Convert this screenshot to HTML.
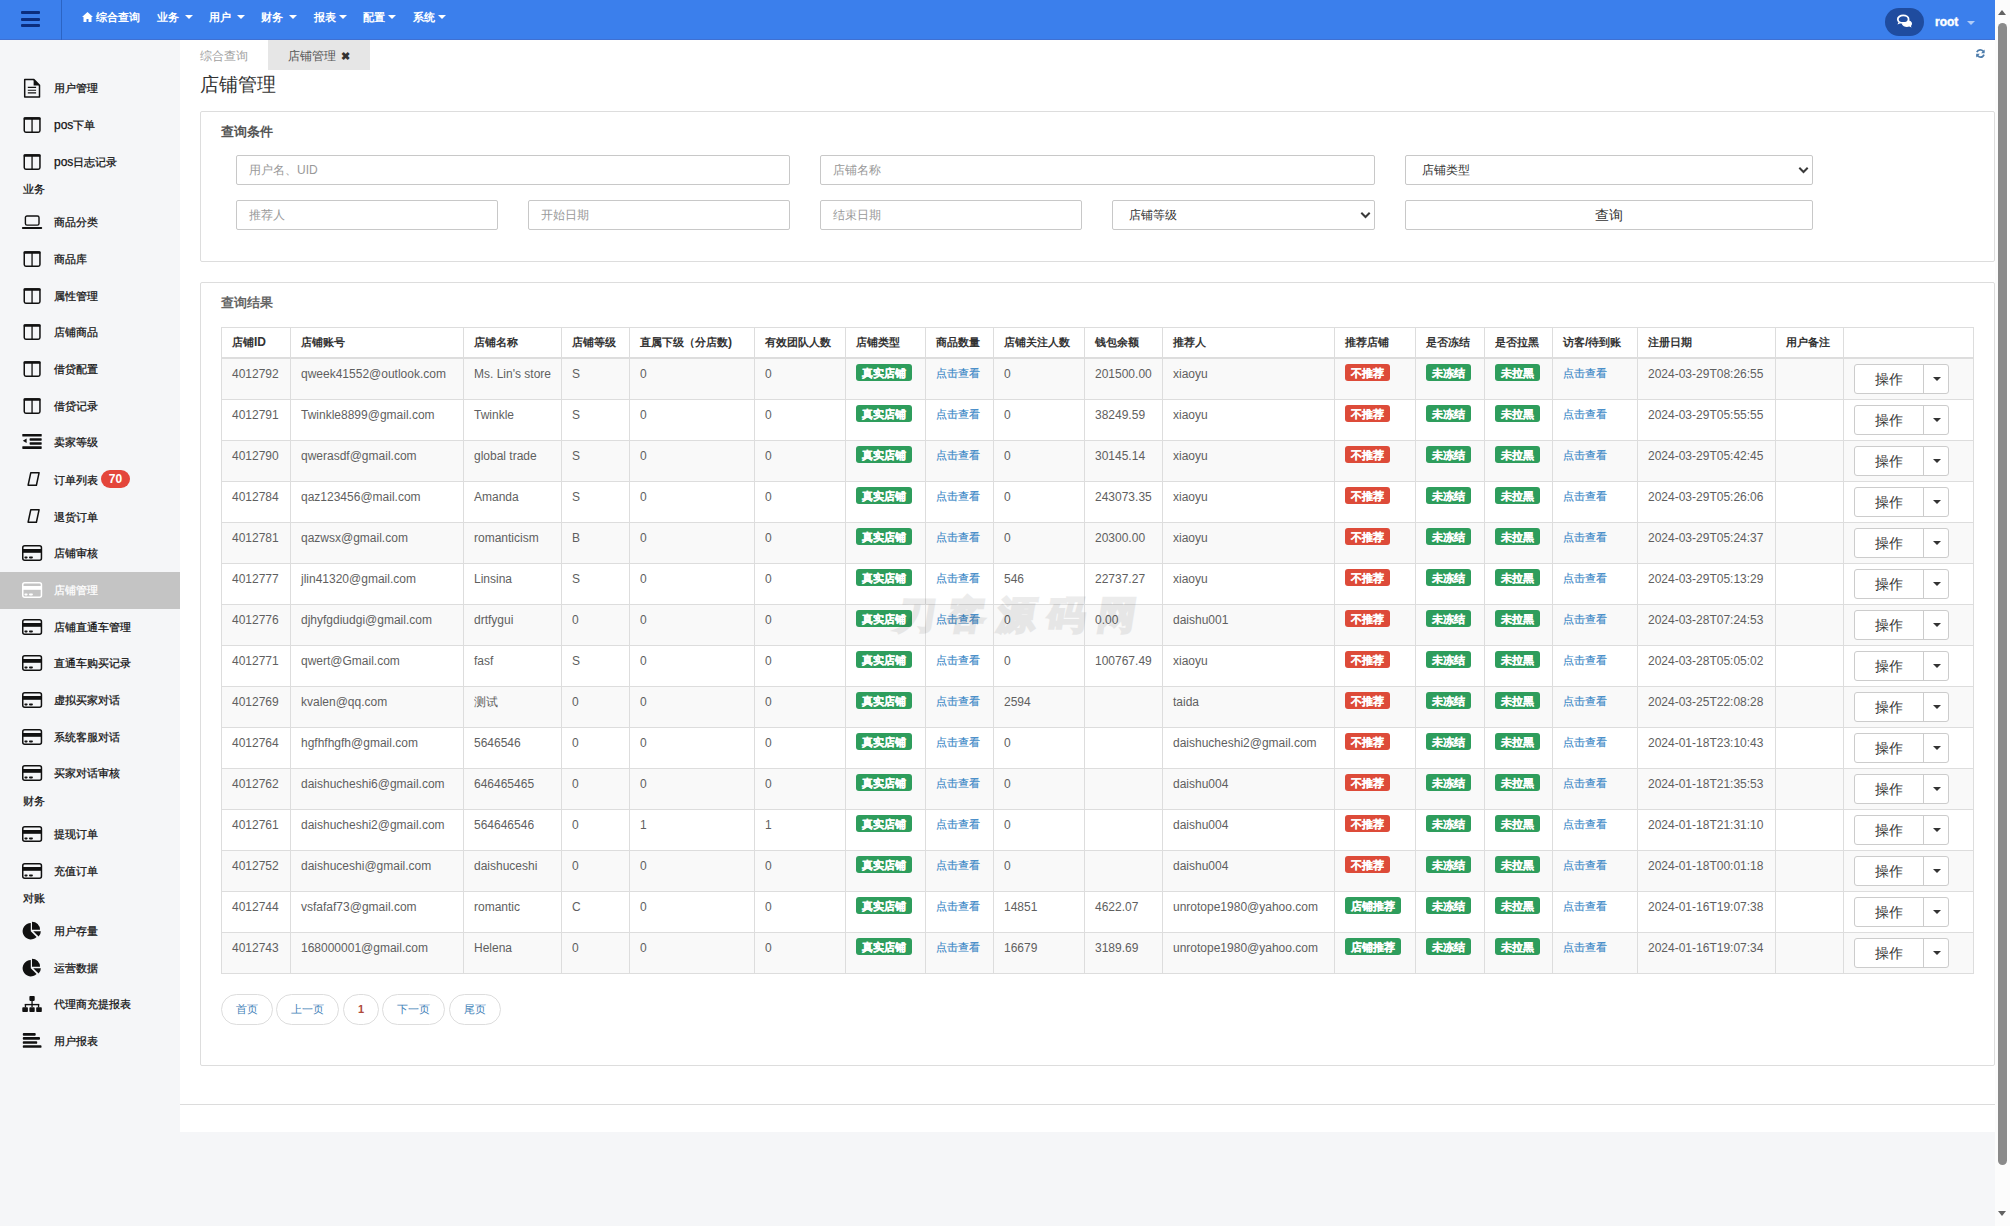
<!DOCTYPE html>
<html><head><meta charset="utf-8"><title>店铺管理</title><style>
*{box-sizing:border-box;margin:0;padding:0}
html,body{width:2010px;height:1226px;overflow:hidden;background:#fff;font-family:"Liberation Sans",sans-serif;font-size:12px;color:#333}
.top{position:absolute;left:0;top:0;width:1995px;height:40px;background:#3b7fec;box-shadow:inset 0 -1px 0 #3f70d2}
.burger{position:absolute;left:21px;top:11px;width:19px;height:16px}
.burger i{position:absolute;left:0;width:19px;height:3px;background:#0b2d7e;border-radius:1px}
.vdiv{position:absolute;left:61px;top:0;width:1px;height:40px;background:#2b64c4}
.nav{position:absolute;top:0;height:36px;line-height:35px;color:#fff;font-weight:bold;font-size:11px;white-space:nowrap}
.ncaret{display:inline-block;width:0;height:0;border-left:4px solid transparent;border-right:4px solid transparent;border-top:4px solid #fff;vertical-align:middle;margin-left:6px;margin-top:-2px}
.pill{position:absolute;left:1885px;top:8px;width:39px;height:28px;border-radius:14px;background:#1f4c9f}
.root{position:absolute;left:1935px;top:14px;color:#fff;font-weight:bold;font-size:12px;line-height:16px;-webkit-text-stroke:.4px #fff}
.rcaret{position:absolute;left:1967px;top:21px;width:0;height:0;border-left:4px solid transparent;border-right:4px solid transparent;border-top:4px solid rgba(255,255,255,.6)}
.side{position:absolute;left:0;top:40px;width:180px;height:1186px;background:#f5f6f8}
.sitem{position:absolute;left:0;width:180px;height:37px}
.sitem.active{background:#c4c4c4}
.ic{position:absolute;display:block}
.stext{position:absolute;left:54px;top:0;line-height:37px;font-size:11px;color:#111;white-space:nowrap;-webkit-text-stroke:.25px #111}
.active .stext{color:#fff;-webkit-text-stroke:.25px #fff}
.slabel{position:absolute;left:23px;font-size:11px;line-height:18px;color:#111;white-space:nowrap;-webkit-text-stroke:.25px #111}
.badge{position:absolute;left:101px;top:8px;width:29px;height:18px;line-height:18px;text-align:center;border-radius:9px;background:#e4463b;color:#fff;font-weight:bold;font-size:12px}
.main{position:absolute;left:180px;top:40px;width:1815px;height:1090px;background:#fff}
.foot{position:absolute;left:180px;top:1104px;width:1815px;height:1px;background:#dcdcdc}
.below{position:absolute;left:180px;top:1132px;width:1815px;height:94px;background:#f5f6f8}
.tab1{position:absolute;left:200px;top:48px;line-height:17px;color:#a0a0a0;font-size:12px}
.tab2{position:absolute;left:268px;top:40px;width:102px;height:30px;background:#e6e6e6;color:#555;font-size:12px;line-height:32px;padding-left:20px}
.tab2 b{font-size:11px;color:#333;margin-left:5px}
.refresh{position:absolute;left:1975px;top:48px}
h1{position:absolute;left:200px;top:72px;font-size:19px;font-weight:normal;color:#333;line-height:26px}
.panel{position:absolute;left:200px;width:1795px;border:1px solid #ddd;border-radius:2px;background:#fff}
.ptitle{position:absolute;left:20px;font-size:13px;font-weight:bold;color:#555}
.inp{position:absolute;height:30px;border:1px solid #c8c8c8;border-radius:2px;background:#fff;color:#999;font-size:12px;line-height:28px;padding-left:12px}
.sel{color:#333;padding-left:16px}
.sel svg{position:absolute;right:3px;top:10px}
.btnq{position:absolute;height:30px;border:1px solid #c8c8c8;border-radius:2px;background:#fff;color:#333;font-size:14px;line-height:28px;text-align:center}
.tbl{position:absolute;left:20px;top:44px;border-collapse:collapse;table-layout:fixed;width:1752px}
.tbl th,.tbl td{border:1px solid #ddd;text-align:left;vertical-align:top;white-space:nowrap;overflow:hidden}
.tbl th{height:30px;padding:0 10px;line-height:29px;font-weight:bold;color:#333;font-size:11px;border-bottom:2px solid #ddd}
.tbl td{height:41px;padding:7px 10px 0;line-height:17px;color:#5f5f5f;font-size:12px}
.tbl tr.odd td{background:#f9f9f9}
.lab{display:inline-block;position:relative;top:-2px;height:17px;line-height:18px;padding:0 6px;border-radius:3px;color:#fff;font-weight:bold;font-size:11px;-webkit-text-stroke:.2px #fff;overflow:hidden}
.green{background:#2e9d5c}
.red{background:#dd4b39}
.lnk{color:#3a87c6;font-size:11px;position:relative;top:-1px;-webkit-text-stroke:.15px #3a87c6}
.opbtn{position:relative;width:95px;height:30px;border:1px solid #ccc;border-radius:3px;background:#fff;margin-top:-2px}
.op1{position:absolute;left:0;top:0;width:69px;height:28px;line-height:28px;text-align:center;font-size:14px;color:#333;border-right:1px solid #ccc}
.op2{position:absolute;left:69px;top:0;width:25px;height:28px}
.caret{position:absolute;left:9px;top:12px;width:0;height:0;border-left:4px solid transparent;border-right:4px solid transparent;border-top:4px solid #333}
.pager{position:absolute;left:20px;top:711px;height:31px}
.pg{position:absolute;top:0;height:31px;border:1px solid #ddd;border-radius:16px;color:#3f82b8;font-size:11px;line-height:29px;text-align:center;background:#fff}
.wm{position:absolute;left:894px;top:590px;font-size:38px;font-weight:bold;color:#000;-webkit-text-stroke:2.5px #000;opacity:.07;letter-spacing:12px;white-space:nowrap;transform:skewX(-9deg);transform-origin:0 100%}
.sb{position:absolute;left:1995px;top:0;width:15px;height:1226px;background:#fcfcfc}
.sbthumb{position:absolute;left:3px;top:23px;width:9px;height:1142px;border-radius:5px;background:#8a8a8a}
.sbup{position:absolute;left:3px;top:10px;width:0;height:0;border-left:4.5px solid transparent;border-right:4.5px solid transparent;border-bottom:5px solid #626262}
.sbdn{position:absolute;left:3px;top:1211px;width:0;height:0;border-left:4.5px solid transparent;border-right:4.5px solid transparent;border-top:5px solid #626262}
</style></head><body>
<div class="top">
  <div class="burger"><i style="top:0"></i><i style="top:7px"></i><i style="top:13px"></i></div>
  <div class="vdiv"></div>
  <div class="nav" style="left:82px"><svg width="11" height="10" viewBox="0 0 11 10" style="vertical-align:-1px;margin-right:3px"><path d="M5.5 0L0 5h1.5v5h3V7h2v3h3V5H11z" fill="#fff"/></svg>综合查询</div>
  <div class="nav" style="left:157px">业务<i class="ncaret"></i></div>
  <div class="nav" style="left:209px">用户<i class="ncaret"></i></div>
  <div class="nav" style="left:261px">财务<i class="ncaret"></i></div>
  <div class="nav" style="left:314px">报表<i class="ncaret" style="margin-left:3px"></i></div>
  <div class="nav" style="left:363px">配置<i class="ncaret" style="margin-left:3px"></i></div>
  <div class="nav" style="left:413px">系统<i class="ncaret" style="margin-left:3px"></i></div>
  <div class="pill"><svg width="20" height="16" viewBox="0 0 20 16" style="position:absolute;left:11px;top:6px"><path d="M9.5 5.5c3 0 6.5 1.8 6.5 4.2 0 0.9-0.4 1.7-1.1 2.3l0.7 1.5-2.4-0.9c-0.7 0.2-1.5 0.3-2.3 0.3-2.3 0-4.3-1-5-2.6z" fill="#fff"/><ellipse cx="7.2" cy="5.2" rx="5.4" ry="3.8" fill="#1f4c9f" stroke="#fff" stroke-width="1.8"/><path d="M2.6 8l-1.1 2.6 3.6-1.5z" fill="#fff"/></svg></div>
  <div class="root">root</div>
  <div class="rcaret"></div>
</div>
<div class="side">
<div style="position:absolute;left:0;top:-40px">
<div class="sitem" style="top:70px"><svg class="ic" style="left:23px;top:8px" width="19" height="21" viewBox="0 0 19 21"><path d="M1.7 1.6H10.9L16.5 7.2V19H1.7Z" fill="none" stroke="#111" stroke-width="1.5" stroke-linejoin="round"/><path d="M10.6 1.6V7.5H16.5Z" fill="#111"/><path d="M4.8 9.4H13.1M4.8 12.2H13.1M4.8 14.9H13.1" stroke="#111" stroke-width="1.1"/></svg><span class="stext">用户管理</span></div>
<div class="sitem" style="top:107px"><svg class="ic" style="left:23px;top:10px" width="19" height="17" viewBox="0 0 19 17"><rect x="1.25" y="0.95" width="15.7" height="14.2" rx="1.6" fill="none" stroke="#111" stroke-width="1.5"/><rect x="0.5" y="0.2" width="17.2" height="2.6" rx="1" fill="#111"/><rect x="8.4" y="1" width="1.3" height="14" fill="#111"/></svg><span class="stext"><span style="font-size:12px">pos</span>下单</span></div>
<div class="sitem" style="top:144px"><svg class="ic" style="left:23px;top:10px" width="19" height="17" viewBox="0 0 19 17"><rect x="1.25" y="0.95" width="15.7" height="14.2" rx="1.6" fill="none" stroke="#111" stroke-width="1.5"/><rect x="0.5" y="0.2" width="17.2" height="2.6" rx="1" fill="#111"/><rect x="8.4" y="1" width="1.3" height="14" fill="#111"/></svg><span class="stext"><span style="font-size:12px">pos</span>日志记录</span></div>
<div class="slabel" style="top:180px">业务</div>
<div class="sitem" style="top:204px"><svg class="ic" style="left:21px;top:11px" width="23" height="15" viewBox="0 0 23 15"><rect x="4.4" y="1" width="13.6" height="9.1" rx="1.6" fill="none" stroke="#111" stroke-width="1.4"/><rect x="0.9" y="12" width="20.3" height="1.9" rx="0.9" fill="#111"/></svg><span class="stext">商品分类</span></div>
<div class="sitem" style="top:241px"><svg class="ic" style="left:23px;top:10px" width="19" height="17" viewBox="0 0 19 17"><rect x="1.25" y="0.95" width="15.7" height="14.2" rx="1.6" fill="none" stroke="#111" stroke-width="1.5"/><rect x="0.5" y="0.2" width="17.2" height="2.6" rx="1" fill="#111"/><rect x="8.4" y="1" width="1.3" height="14" fill="#111"/></svg><span class="stext">商品库</span></div>
<div class="sitem" style="top:278px"><svg class="ic" style="left:23px;top:10px" width="19" height="17" viewBox="0 0 19 17"><rect x="1.25" y="0.95" width="15.7" height="14.2" rx="1.6" fill="none" stroke="#111" stroke-width="1.5"/><rect x="0.5" y="0.2" width="17.2" height="2.6" rx="1" fill="#111"/><rect x="8.4" y="1" width="1.3" height="14" fill="#111"/></svg><span class="stext">属性管理</span></div>
<div class="sitem" style="top:314px"><svg class="ic" style="left:23px;top:10px" width="19" height="17" viewBox="0 0 19 17"><rect x="1.25" y="0.95" width="15.7" height="14.2" rx="1.6" fill="none" stroke="#111" stroke-width="1.5"/><rect x="0.5" y="0.2" width="17.2" height="2.6" rx="1" fill="#111"/><rect x="8.4" y="1" width="1.3" height="14" fill="#111"/></svg><span class="stext">店铺商品</span></div>
<div class="sitem" style="top:351px"><svg class="ic" style="left:23px;top:10px" width="19" height="17" viewBox="0 0 19 17"><rect x="1.25" y="0.95" width="15.7" height="14.2" rx="1.6" fill="none" stroke="#111" stroke-width="1.5"/><rect x="0.5" y="0.2" width="17.2" height="2.6" rx="1" fill="#111"/><rect x="8.4" y="1" width="1.3" height="14" fill="#111"/></svg><span class="stext">借贷配置</span></div>
<div class="sitem" style="top:388px"><svg class="ic" style="left:23px;top:10px" width="19" height="17" viewBox="0 0 19 17"><rect x="1.25" y="0.95" width="15.7" height="14.2" rx="1.6" fill="none" stroke="#111" stroke-width="1.5"/><rect x="0.5" y="0.2" width="17.2" height="2.6" rx="1" fill="#111"/><rect x="8.4" y="1" width="1.3" height="14" fill="#111"/></svg><span class="stext">借贷记录</span></div>
<div class="sitem" style="top:424px"><svg class="ic" style="left:22px;top:9px" width="21" height="17" viewBox="0 0 21 17"><rect x="0.3" y="0.9" width="19.4" height="2.7" rx="0.6" fill="#111"/><rect x="7.6" y="5.3" width="12.1" height="2.4" rx="0.6" fill="#111"/><rect x="7.6" y="9.2" width="12.1" height="2.5" rx="0.6" fill="#111"/><rect x="0.3" y="13.2" width="19.4" height="2.7" rx="0.6" fill="#111"/><path d="M4.6 5.5L0.8 7.75L4.6 10Z" fill="#111"/></svg><span class="stext">卖家等级</span></div>
<div class="sitem" style="top:462px"><svg class="ic" style="left:27px;top:9px" width="15" height="17" viewBox="0 0 15 17"><path d="M3.8 1.65H12.1L9.4 14.25H1.1Z" fill="none" stroke="#111" stroke-width="1.5" stroke-linejoin="round"/></svg><span class="stext">订单列表</span><span class="badge">70</span></div>
<div class="sitem" style="top:499px"><svg class="ic" style="left:27px;top:9px" width="15" height="17" viewBox="0 0 15 17"><path d="M3.8 1.65H12.1L9.4 14.25H1.1Z" fill="none" stroke="#111" stroke-width="1.5" stroke-linejoin="round"/></svg><span class="stext">退货订单</span></div>
<div class="sitem" style="top:535px"><svg class="ic" style="left:22px;top:9px" width="21" height="18" viewBox="0 0 21 18"><rect x="0.75" y="1.65" width="18.7" height="14.6" rx="2" fill="none" stroke="#111" stroke-width="1.5"/><rect x="0.5" y="5" width="19.2" height="3.8" fill="#111"/><rect x="2.4" y="12.5" width="3.2" height="1.9" rx="0.8" fill="#111"/><rect x="7" y="12.5" width="3.9" height="1.9" rx="0.8" fill="#111"/></svg><span class="stext">店铺审核</span></div>
<div class="sitem active" style="top:572px"><svg class="ic" style="left:22px;top:9px" width="21" height="18" viewBox="0 0 21 18"><rect x="0.75" y="1.65" width="18.7" height="14.6" rx="2" fill="none" stroke="#fff" stroke-width="1.5"/><rect x="0.5" y="5" width="19.2" height="3.8" fill="#fff"/><rect x="2.4" y="12.5" width="3.2" height="1.9" rx="0.8" fill="#fff"/><rect x="7" y="12.5" width="3.9" height="1.9" rx="0.8" fill="#fff"/></svg><span class="stext">店铺管理</span></div>
<div class="sitem" style="top:609px"><svg class="ic" style="left:22px;top:9px" width="21" height="18" viewBox="0 0 21 18"><rect x="0.75" y="1.65" width="18.7" height="14.6" rx="2" fill="none" stroke="#111" stroke-width="1.5"/><rect x="0.5" y="5" width="19.2" height="3.8" fill="#111"/><rect x="2.4" y="12.5" width="3.2" height="1.9" rx="0.8" fill="#111"/><rect x="7" y="12.5" width="3.9" height="1.9" rx="0.8" fill="#111"/></svg><span class="stext">店铺直通车管理</span></div>
<div class="sitem" style="top:645px"><svg class="ic" style="left:22px;top:9px" width="21" height="18" viewBox="0 0 21 18"><rect x="0.75" y="1.65" width="18.7" height="14.6" rx="2" fill="none" stroke="#111" stroke-width="1.5"/><rect x="0.5" y="5" width="19.2" height="3.8" fill="#111"/><rect x="2.4" y="12.5" width="3.2" height="1.9" rx="0.8" fill="#111"/><rect x="7" y="12.5" width="3.9" height="1.9" rx="0.8" fill="#111"/></svg><span class="stext">直通车购买记录</span></div>
<div class="sitem" style="top:682px"><svg class="ic" style="left:22px;top:9px" width="21" height="18" viewBox="0 0 21 18"><rect x="0.75" y="1.65" width="18.7" height="14.6" rx="2" fill="none" stroke="#111" stroke-width="1.5"/><rect x="0.5" y="5" width="19.2" height="3.8" fill="#111"/><rect x="2.4" y="12.5" width="3.2" height="1.9" rx="0.8" fill="#111"/><rect x="7" y="12.5" width="3.9" height="1.9" rx="0.8" fill="#111"/></svg><span class="stext">虚拟买家对话</span></div>
<div class="sitem" style="top:719px"><svg class="ic" style="left:22px;top:9px" width="21" height="18" viewBox="0 0 21 18"><rect x="0.75" y="1.65" width="18.7" height="14.6" rx="2" fill="none" stroke="#111" stroke-width="1.5"/><rect x="0.5" y="5" width="19.2" height="3.8" fill="#111"/><rect x="2.4" y="12.5" width="3.2" height="1.9" rx="0.8" fill="#111"/><rect x="7" y="12.5" width="3.9" height="1.9" rx="0.8" fill="#111"/></svg><span class="stext">系统客服对话</span></div>
<div class="sitem" style="top:755px"><svg class="ic" style="left:22px;top:9px" width="21" height="18" viewBox="0 0 21 18"><rect x="0.75" y="1.65" width="18.7" height="14.6" rx="2" fill="none" stroke="#111" stroke-width="1.5"/><rect x="0.5" y="5" width="19.2" height="3.8" fill="#111"/><rect x="2.4" y="12.5" width="3.2" height="1.9" rx="0.8" fill="#111"/><rect x="7" y="12.5" width="3.9" height="1.9" rx="0.8" fill="#111"/></svg><span class="stext">买家对话审核</span></div>
<div class="slabel" style="top:792px">财务</div>
<div class="sitem" style="top:816px"><svg class="ic" style="left:22px;top:9px" width="21" height="18" viewBox="0 0 21 18"><rect x="0.75" y="1.65" width="18.7" height="14.6" rx="2" fill="none" stroke="#111" stroke-width="1.5"/><rect x="0.5" y="5" width="19.2" height="3.8" fill="#111"/><rect x="2.4" y="12.5" width="3.2" height="1.9" rx="0.8" fill="#111"/><rect x="7" y="12.5" width="3.9" height="1.9" rx="0.8" fill="#111"/></svg><span class="stext">提现订单</span></div>
<div class="sitem" style="top:853px"><svg class="ic" style="left:22px;top:9px" width="21" height="18" viewBox="0 0 21 18"><rect x="0.75" y="1.65" width="18.7" height="14.6" rx="2" fill="none" stroke="#111" stroke-width="1.5"/><rect x="0.5" y="5" width="19.2" height="3.8" fill="#111"/><rect x="2.4" y="12.5" width="3.2" height="1.9" rx="0.8" fill="#111"/><rect x="7" y="12.5" width="3.9" height="1.9" rx="0.8" fill="#111"/></svg><span class="stext">充值订单</span></div>
<div class="slabel" style="top:889px">对账</div>
<div class="sitem" style="top:913px"><svg class="ic" style="left:22px;top:8px" width="21" height="20" viewBox="0 0 21 20"><path d="M8.8 10.2V2A8.2 8.2 0 1 0 14.6 16Z" fill="#111"/><path d="M10 8.7V0.7A8 8 0 0 1 18 8.7Z" fill="#111"/><path d="M11.2 10.2H18.8A7.6 7.6 0 0 1 16.6 15.6Z" fill="#111"/></svg><span class="stext">用户存量</span></div>
<div class="sitem" style="top:950px"><svg class="ic" style="left:22px;top:8px" width="21" height="20" viewBox="0 0 21 20"><path d="M8.8 10.2V2A8.2 8.2 0 1 0 14.6 16Z" fill="#111"/><path d="M10 8.7V0.7A8 8 0 0 1 18 8.7Z" fill="#111"/><path d="M11.2 10.2H18.8A7.6 7.6 0 0 1 16.6 15.6Z" fill="#111"/></svg><span class="stext">运营数据</span></div>
<div class="sitem" style="top:986px"><svg class="ic" style="left:22px;top:9px" width="21" height="19" viewBox="0 0 21 19"><rect x="7.4" y="1" width="5.3" height="4.9" rx="0.8" fill="#111"/><rect x="9.4" y="5" width="1.3" height="7" fill="#111"/><rect x="2.8" y="8.9" width="14.4" height="1.4" fill="#111"/><rect x="2.8" y="9" width="1.3" height="3.5" fill="#111"/><rect x="15.9" y="9" width="1.3" height="3.5" fill="#111"/><rect x="0.3" y="12.2" width="5.6" height="4.8" rx="0.8" fill="#111"/><rect x="7.4" y="12.2" width="5.3" height="4.8" rx="0.8" fill="#111"/><rect x="14.2" y="12.2" width="5.6" height="4.8" rx="0.8" fill="#111"/></svg><span class="stext">代理商充提报表</span></div>
<div class="sitem" style="top:1023px"><svg class="ic" style="left:22px;top:9px" width="21" height="17" viewBox="0 0 21 17"><rect x="0.8" y="1" width="12.9" height="2.7" rx="0.9" fill="#111"/><rect x="0.8" y="5" width="17.2" height="2.7" rx="0.9" fill="#111"/><rect x="0.8" y="9.2" width="14.4" height="2.6" rx="0.9" fill="#111"/><rect x="0.8" y="13.2" width="18.7" height="2.6" rx="0.9" fill="#111"/></svg><span class="stext">用户报表</span></div>
</div>
</div>
<div class="main"></div>
<div class="foot"></div>
<div class="below"></div>
<div class="tab1">综合查询</div>
<div class="tab2">店铺管理<b>✖</b></div>
<div class="refresh"><svg width="11" height="11" viewBox="0 0 11 11"><path d="M1.8 4.2C2.6 2.4 4.4 1.6 6.2 2c1.2 0.3 2 1 2.6 2" fill="none" stroke="#4d7cab" stroke-width="1.7"/><path d="M9.6 1.5v3.8H6z" fill="#4d7cab"/><path d="M9 6.6C8.2 8.6 6.4 9.4 4.6 9c-1.2-0.3-2-1-2.6-2" fill="none" stroke="#4d7cab" stroke-width="1.7"/><path d="M1.2 9.6V5.8h3.6z" fill="#4d7cab"/></svg></div>
<h1>店铺管理</h1>
<div class="panel" style="top:111px;height:151px">
  <div class="ptitle" style="top:11px">查询条件</div>
  <div class="inp" style="left:35px;top:43px;width:554px">用户名、UID</div>
  <div class="inp" style="left:619px;top:43px;width:555px">店铺名称</div>
  <div class="inp sel" style="left:1204px;top:43px;width:408px">店铺类型<svg width="11" height="8" viewBox="0 0 11 8"><path d="M1.3 1.8l4.2 4.2 4.2-4.2" fill="none" stroke="#3a3a3a" stroke-width="2"/></svg></div>
  <div class="inp" style="left:35px;top:88px;width:262px">推荐人</div>
  <div class="inp" style="left:327px;top:88px;width:262px">开始日期</div>
  <div class="inp" style="left:619px;top:88px;width:262px">结束日期</div>
  <div class="inp sel" style="left:911px;top:88px;width:263px">店铺等级<svg width="11" height="8" viewBox="0 0 11 8"><path d="M1.3 1.8l4.2 4.2 4.2-4.2" fill="none" stroke="#3a3a3a" stroke-width="2"/></svg></div>
  <div class="btnq" style="left:1204px;top:88px;width:408px">查询</div>
</div>
<div class="panel" style="top:282px;height:784px">
  <div class="ptitle" style="top:11px;color:#666">查询结果</div>
  <table class="tbl"><colgroup><col style="width:69px"><col style="width:173px"><col style="width:98px"><col style="width:68px"><col style="width:125px"><col style="width:91px"><col style="width:80px"><col style="width:68px"><col style="width:91px"><col style="width:78px"><col style="width:172px"><col style="width:81px"><col style="width:69px"><col style="width:68px"><col style="width:85px"><col style="width:138px"><col style="width:68px"><col style="width:130px"></colgroup><thead><tr><th>店铺<span style="font-size:12px">ID</span></th><th>店铺账号</th><th>店铺名称</th><th>店铺等级</th><th>直属下级（分店数<span style="font-size:12px">)</span></th><th>有效团队人数</th><th>店铺类型</th><th>商品数量</th><th>店铺关注人数</th><th>钱包余额</th><th>推荐人</th><th>推荐店铺</th><th>是否冻结</th><th>是否拉黑</th><th>访客<span style="font-size:12px">/</span>待到账</th><th>注册日期</th><th>用户备注</th><th></th></tr></thead><tbody><tr class="odd"><td>4012792</td><td>qweek41552@outlook.com</td><td>Ms. Lin's store</td><td>S</td><td>0</td><td>0</td><td><span class="lab green">真实店铺</span></td><td><span class="lnk">点击查看</span></td><td>0</td><td>201500.00</td><td>xiaoyu</td><td><span class="lab red">不推荐</span></td><td><span class="lab green">未冻结</span></td><td><span class="lab green">未拉黑</span></td><td><span class="lnk">点击查看</span></td><td>2024-03-29T08:26:55</td><td></td><td><div class="opbtn"><span class="op1">操作</span><span class="op2"><i class="caret"></i></span></div></td></tr><tr class="even"><td>4012791</td><td>Twinkle8899@gmail.com</td><td>Twinkle</td><td>S</td><td>0</td><td>0</td><td><span class="lab green">真实店铺</span></td><td><span class="lnk">点击查看</span></td><td>0</td><td>38249.59</td><td>xiaoyu</td><td><span class="lab red">不推荐</span></td><td><span class="lab green">未冻结</span></td><td><span class="lab green">未拉黑</span></td><td><span class="lnk">点击查看</span></td><td>2024-03-29T05:55:55</td><td></td><td><div class="opbtn"><span class="op1">操作</span><span class="op2"><i class="caret"></i></span></div></td></tr><tr class="odd"><td>4012790</td><td>qwerasdf@gmail.com</td><td>global trade</td><td>S</td><td>0</td><td>0</td><td><span class="lab green">真实店铺</span></td><td><span class="lnk">点击查看</span></td><td>0</td><td>30145.14</td><td>xiaoyu</td><td><span class="lab red">不推荐</span></td><td><span class="lab green">未冻结</span></td><td><span class="lab green">未拉黑</span></td><td><span class="lnk">点击查看</span></td><td>2024-03-29T05:42:45</td><td></td><td><div class="opbtn"><span class="op1">操作</span><span class="op2"><i class="caret"></i></span></div></td></tr><tr class="even"><td>4012784</td><td>qaz123456@mail.com</td><td>Amanda</td><td>S</td><td>0</td><td>0</td><td><span class="lab green">真实店铺</span></td><td><span class="lnk">点击查看</span></td><td>0</td><td>243073.35</td><td>xiaoyu</td><td><span class="lab red">不推荐</span></td><td><span class="lab green">未冻结</span></td><td><span class="lab green">未拉黑</span></td><td><span class="lnk">点击查看</span></td><td>2024-03-29T05:26:06</td><td></td><td><div class="opbtn"><span class="op1">操作</span><span class="op2"><i class="caret"></i></span></div></td></tr><tr class="odd"><td>4012781</td><td>qazwsx@gmail.com</td><td>romanticism</td><td>B</td><td>0</td><td>0</td><td><span class="lab green">真实店铺</span></td><td><span class="lnk">点击查看</span></td><td>0</td><td>20300.00</td><td>xiaoyu</td><td><span class="lab red">不推荐</span></td><td><span class="lab green">未冻结</span></td><td><span class="lab green">未拉黑</span></td><td><span class="lnk">点击查看</span></td><td>2024-03-29T05:24:37</td><td></td><td><div class="opbtn"><span class="op1">操作</span><span class="op2"><i class="caret"></i></span></div></td></tr><tr class="even"><td>4012777</td><td>jlin41320@gmail.com</td><td>Linsina</td><td>S</td><td>0</td><td>0</td><td><span class="lab green">真实店铺</span></td><td><span class="lnk">点击查看</span></td><td>546</td><td>22737.27</td><td>xiaoyu</td><td><span class="lab red">不推荐</span></td><td><span class="lab green">未冻结</span></td><td><span class="lab green">未拉黑</span></td><td><span class="lnk">点击查看</span></td><td>2024-03-29T05:13:29</td><td></td><td><div class="opbtn"><span class="op1">操作</span><span class="op2"><i class="caret"></i></span></div></td></tr><tr class="odd"><td>4012776</td><td>djhyfgdiudgi@gmail.com</td><td>drtfygui</td><td>0</td><td>0</td><td>0</td><td><span class="lab green">真实店铺</span></td><td><span class="lnk">点击查看</span></td><td>0</td><td>0.00</td><td>daishu001</td><td><span class="lab red">不推荐</span></td><td><span class="lab green">未冻结</span></td><td><span class="lab green">未拉黑</span></td><td><span class="lnk">点击查看</span></td><td>2024-03-28T07:24:53</td><td></td><td><div class="opbtn"><span class="op1">操作</span><span class="op2"><i class="caret"></i></span></div></td></tr><tr class="even"><td>4012771</td><td>qwert@Gmail.com</td><td>fasf</td><td>S</td><td>0</td><td>0</td><td><span class="lab green">真实店铺</span></td><td><span class="lnk">点击查看</span></td><td>0</td><td>100767.49</td><td>xiaoyu</td><td><span class="lab red">不推荐</span></td><td><span class="lab green">未冻结</span></td><td><span class="lab green">未拉黑</span></td><td><span class="lnk">点击查看</span></td><td>2024-03-28T05:05:02</td><td></td><td><div class="opbtn"><span class="op1">操作</span><span class="op2"><i class="caret"></i></span></div></td></tr><tr class="odd"><td>4012769</td><td>kvalen@qq.com</td><td>测试</td><td>0</td><td>0</td><td>0</td><td><span class="lab green">真实店铺</span></td><td><span class="lnk">点击查看</span></td><td>2594</td><td></td><td>taida</td><td><span class="lab red">不推荐</span></td><td><span class="lab green">未冻结</span></td><td><span class="lab green">未拉黑</span></td><td><span class="lnk">点击查看</span></td><td>2024-03-25T22:08:28</td><td></td><td><div class="opbtn"><span class="op1">操作</span><span class="op2"><i class="caret"></i></span></div></td></tr><tr class="even"><td>4012764</td><td>hgfhfhgfh@gmail.com</td><td>5646546</td><td>0</td><td>0</td><td>0</td><td><span class="lab green">真实店铺</span></td><td><span class="lnk">点击查看</span></td><td>0</td><td></td><td>daishucheshi2@gmail.com</td><td><span class="lab red">不推荐</span></td><td><span class="lab green">未冻结</span></td><td><span class="lab green">未拉黑</span></td><td><span class="lnk">点击查看</span></td><td>2024-01-18T23:10:43</td><td></td><td><div class="opbtn"><span class="op1">操作</span><span class="op2"><i class="caret"></i></span></div></td></tr><tr class="odd"><td>4012762</td><td>daishucheshi6@gmail.com</td><td>646465465</td><td>0</td><td>0</td><td>0</td><td><span class="lab green">真实店铺</span></td><td><span class="lnk">点击查看</span></td><td>0</td><td></td><td>daishu004</td><td><span class="lab red">不推荐</span></td><td><span class="lab green">未冻结</span></td><td><span class="lab green">未拉黑</span></td><td><span class="lnk">点击查看</span></td><td>2024-01-18T21:35:53</td><td></td><td><div class="opbtn"><span class="op1">操作</span><span class="op2"><i class="caret"></i></span></div></td></tr><tr class="even"><td>4012761</td><td>daishucheshi2@gmail.com</td><td>564646546</td><td>0</td><td>1</td><td>1</td><td><span class="lab green">真实店铺</span></td><td><span class="lnk">点击查看</span></td><td>0</td><td></td><td>daishu004</td><td><span class="lab red">不推荐</span></td><td><span class="lab green">未冻结</span></td><td><span class="lab green">未拉黑</span></td><td><span class="lnk">点击查看</span></td><td>2024-01-18T21:31:10</td><td></td><td><div class="opbtn"><span class="op1">操作</span><span class="op2"><i class="caret"></i></span></div></td></tr><tr class="odd"><td>4012752</td><td>daishuceshi@gmail.com</td><td>daishuceshi</td><td>0</td><td>0</td><td>0</td><td><span class="lab green">真实店铺</span></td><td><span class="lnk">点击查看</span></td><td>0</td><td></td><td>daishu004</td><td><span class="lab red">不推荐</span></td><td><span class="lab green">未冻结</span></td><td><span class="lab green">未拉黑</span></td><td><span class="lnk">点击查看</span></td><td>2024-01-18T00:01:18</td><td></td><td><div class="opbtn"><span class="op1">操作</span><span class="op2"><i class="caret"></i></span></div></td></tr><tr class="even"><td>4012744</td><td>vsfafaf73@gmail.com</td><td>romantic</td><td>C</td><td>0</td><td>0</td><td><span class="lab green">真实店铺</span></td><td><span class="lnk">点击查看</span></td><td>14851</td><td>4622.07</td><td>unrotope1980@yahoo.com</td><td><span class="lab green">店铺推荐</span></td><td><span class="lab green">未冻结</span></td><td><span class="lab green">未拉黑</span></td><td><span class="lnk">点击查看</span></td><td>2024-01-16T19:07:38</td><td></td><td><div class="opbtn"><span class="op1">操作</span><span class="op2"><i class="caret"></i></span></div></td></tr><tr class="odd"><td>4012743</td><td>168000001@gmail.com</td><td>Helena</td><td>0</td><td>0</td><td>0</td><td><span class="lab green">真实店铺</span></td><td><span class="lnk">点击查看</span></td><td>16679</td><td>3189.69</td><td>unrotope1980@yahoo.com</td><td><span class="lab green">店铺推荐</span></td><td><span class="lab green">未冻结</span></td><td><span class="lab green">未拉黑</span></td><td><span class="lnk">点击查看</span></td><td>2024-01-16T19:07:34</td><td></td><td><div class="opbtn"><span class="op1">操作</span><span class="op2"><i class="caret"></i></span></div></td></tr></tbody></table>
  <div class="pager">
    <div class="pg" style="left:0;width:52px">首页</div>
    <div class="pg" style="left:55px;width:63px">上一页</div>
    <div class="pg" style="left:122px;width:36px;color:#b04a3a;font-weight:bold;font-size:11px">1</div>
    <div class="pg" style="left:161px;width:63px">下一页</div>
    <div class="pg" style="left:228px;width:52px">尾页</div>
  </div>
</div>
<div class="wm">刀客源码网</div>
<div class="sb"><div class="sbup"></div><div class="sbthumb"></div><div class="sbdn"></div></div>
</body></html>
